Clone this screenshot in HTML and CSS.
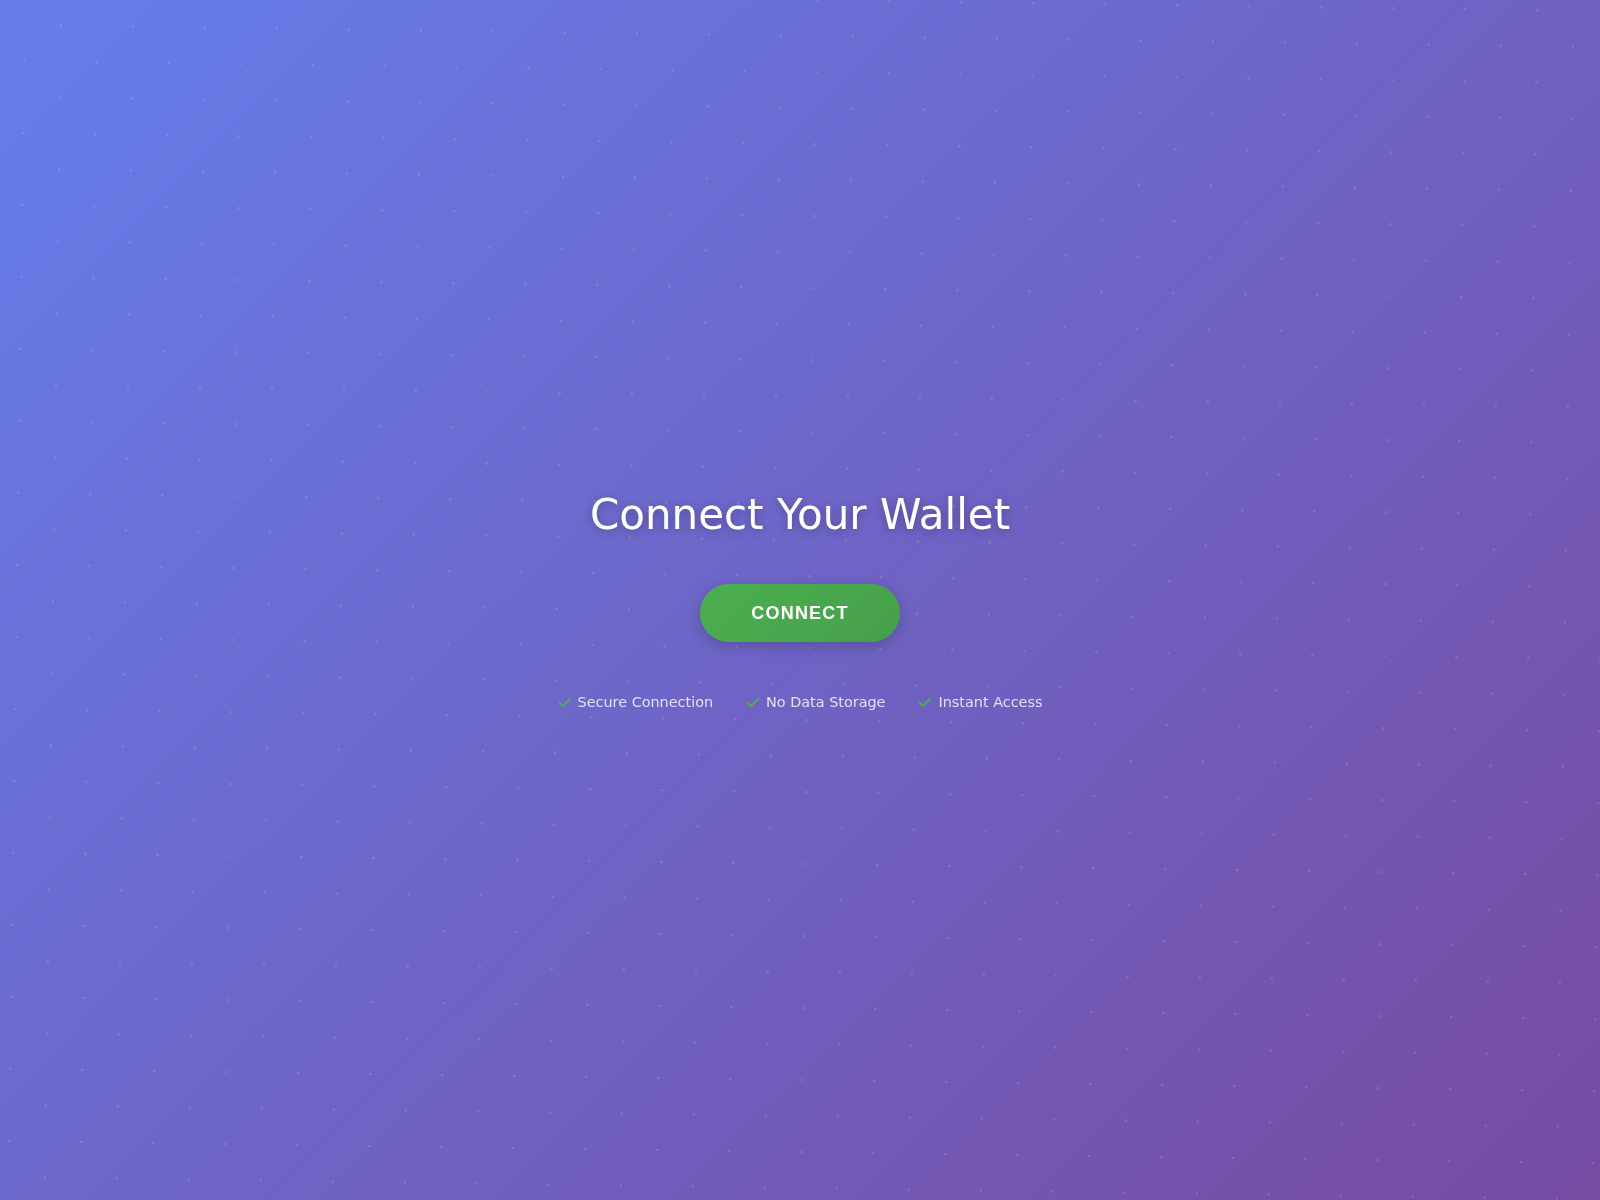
FILE: index.html
```html
<!DOCTYPE html>
<html lang="en">
<head>
<meta charset="utf-8">
<title>Connect Your Wallet</title>
<link rel="stylesheet" href="styles.css">
</head>
<body>
<div class="bg"><div class="dots"></div></div>
<main class="container">
  <h1 class="title">Connect Your Wallet</h1>
  <button class="connect-btn" type="button">CONNECT</button>
  <ul class="features">
    <li class="feature"><svg class="check" viewBox="0 0 14 14" width="14" height="14" aria-hidden="true"><polyline points="1.5,7.5 5,11 12.5,3.5" fill="none" stroke="#4caf50" stroke-width="1.8" stroke-linecap="round" stroke-linejoin="round"/></svg>Secure Connection</li>
    <li class="feature"><svg class="check" viewBox="0 0 14 14" width="14" height="14" aria-hidden="true"><polyline points="1.5,7.5 5,11 12.5,3.5" fill="none" stroke="#4caf50" stroke-width="1.8" stroke-linecap="round" stroke-linejoin="round"/></svg>No Data Storage</li>
    <li class="feature"><svg class="check" viewBox="0 0 14 14" width="14" height="14" aria-hidden="true"><polyline points="1.5,7.5 5,11 12.5,3.5" fill="none" stroke="#4caf50" stroke-width="1.8" stroke-linecap="round" stroke-linejoin="round"/></svg>Instant Access</li>
  </ul>
</main>
</body>
</html>
```
FILE: styles.css
```css
html, body {
  margin: 0;
  padding: 0;
  height: 100%;
  overflow: hidden;
}
body {
  font-family: "DejaVu Sans", Verdana, sans-serif;
  background: linear-gradient(135deg, #667eea 0%, #764ba2 100%);
  position: relative;
}
.bg {
  position: fixed;
  inset: 0;
  overflow: hidden;
  pointer-events: none;
}
.dots {
  position: absolute;
  top: -60px;
  left: -60px;
  right: -60px;
  bottom: -60px;
  background-image:
    radial-gradient(circle at center, rgba(255,255,255,0.16) 1.2px, transparent 1.6px),
    radial-gradient(circle at center, rgba(255,255,255,0.16) 1.2px, transparent 1.6px);
  background-size: 72px 72px, 72px 72px;
  background-position: 41px 24px, 77px 60px;
  transform: rotate(0.8deg);
}
.container {
  position: relative;
  height: 100vh;
  display: flex;
  flex-direction: column;
  align-items: center;
  justify-content: center;
  color: #fff;
  text-align: center;
}
.title {
  margin: 0 0 44px;
  font-size: 42px;
  font-weight: 400;
  line-height: 1.2;
  text-shadow: 0 2px 10px rgba(0,0,0,0.3);
}
.connect-btn {
  width: 200px;
  height: 58px;
  border: none;
  border-radius: 29px;
  background: linear-gradient(135deg, #4caf50 0%, #45a049 100%);
  color: #fff;
  font-family: "Liberation Sans", Arial, sans-serif;
  font-weight: 700;
  font-size: 18px;
  letter-spacing: 1.2px;
  box-shadow: 0 4px 15px rgba(0,0,0,0.2);
  cursor: pointer;
}
.features {
  list-style: none;
  margin: 52px 0 0;
  padding: 0;
  display: flex;
  gap: 33px;
  font-size: 14.4px;
  color: rgba(255,255,255,0.8);
}
.feature {
  display: flex;
  align-items: center;
}
.check {
  margin-right: 6px;
  flex: none;
}
```
